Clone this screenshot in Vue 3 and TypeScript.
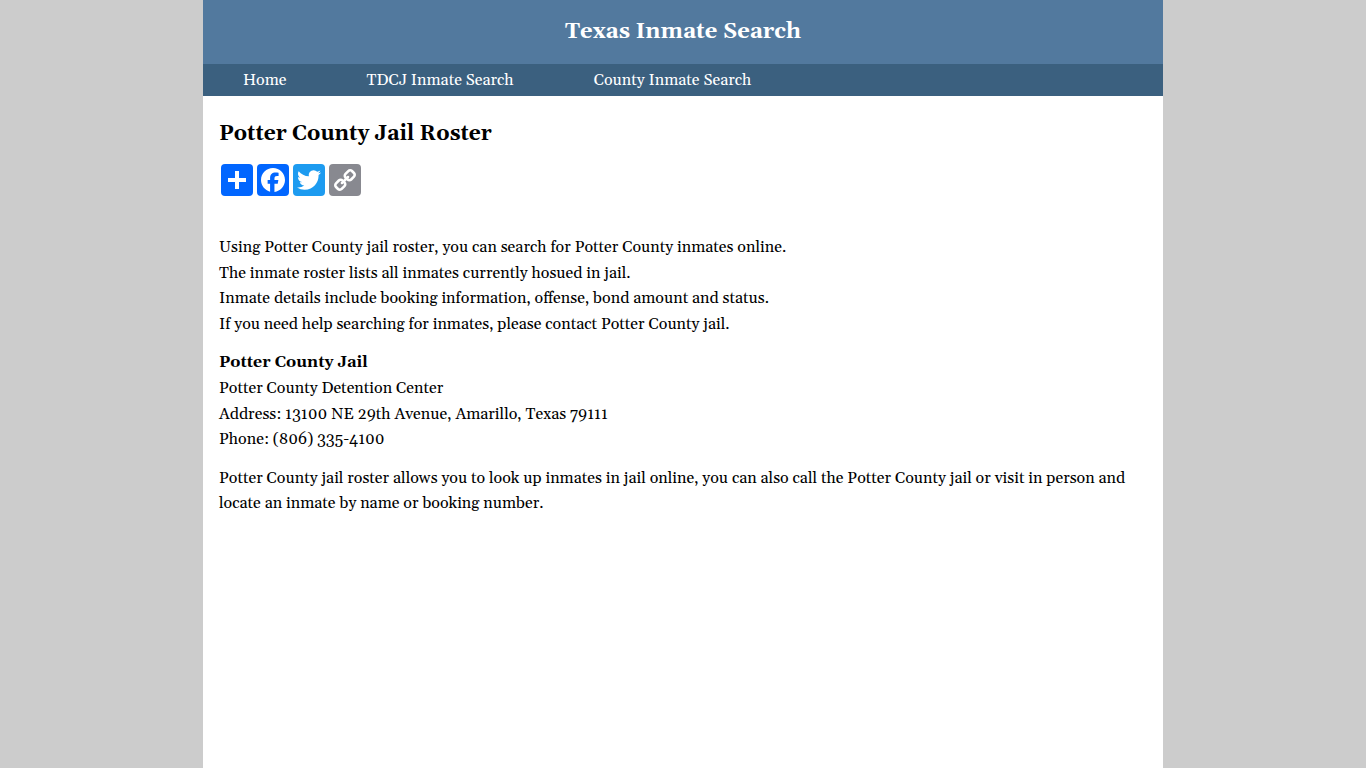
<script setup lang="ts">
interface Link { label: string; href: string }
interface Share { name: string; tone: string; path: string; turn?: string }

const links: Link[] = [
  { label: 'Home', href: '#home' },
  { label: 'TDCJ Inmate Search', href: '#tdcj' },
  { label: 'County Inmate Search', href: '#county' },
]

const shares: Share[] = [
  {
    name: 'Share',
    tone: 'blue',
    path: 'M14 7h4v18h-4z M7 14h18v4H7z',
  },
  {
    name: 'Facebook',
    tone: 'blue',
    path: 'M28 16c0-6.627-5.373-12-12-12S4 9.373 4 16c0 5.628 3.875 10.35 9.101 11.647v-7.98h-2.474V16H13.1v-1.58c0-4.085 1.849-5.978 5.859-5.978.76 0 2.072.15 2.608.298v3.325c-.283-.03-.775-.045-1.386-.045-1.967 0-2.728.745-2.728 2.683V16h3.92l-.673 3.667h-3.247v8.245C23.395 27.195 28 22.135 28 16',
  },
  {
    name: 'Twitter',
    tone: 'sky',
    path: 'M28 8.557a10 10 0 0 1-2.828.775 4.93 4.93 0 0 0 2.166-2.725 9.7 9.7 0 0 1-3.13 1.194 4.92 4.92 0 0 0-3.593-1.55 4.924 4.924 0 0 0-4.794 6.049c-4.09-.21-7.72-2.17-10.15-5.15a4.94 4.94 0 0 0-.665 2.477c0 1.71.87 3.214 2.19 4.1a5 5 0 0 1-2.23-.616v.06c0 2.39 1.7 4.38 3.952 4.83-.414.115-.85.174-1.297.174q-.476-.001-.928-.086a4.935 4.935 0 0 0 4.6 3.42 9.9 9.9 0 0 1-6.114 2.107q-.597 0-1.175-.068a13.95 13.95 0 0 0 7.55 2.213c9.056 0 14.01-7.507 14.01-14.013q0-.32-.015-.637c.96-.695 1.795-1.56 2.455-2.55z',
  },
  {
    name: 'Copy Link',
    tone: 'gray',
    turn: 'matrix(-1 0 0 1 32 0)',
    path: 'M24.412 21.177c0-.36-.126-.665-.377-.917l-2.804-2.804a1.24 1.24 0 0 0-.913-.378c-.377 0-.7.144-.97.43q.04.04.255.25c.144.14.24.236.29.29s.117.14.2.256q.13.175.177.344.048.167.048.366 0 .54-.377.918a1.25 1.25 0 0 1-.918.377 1.4 1.4 0 0 1-.366-.047 1.1 1.1 0 0 1-.345-.175l-.256-.2a4 4 0 0 1-.29-.29c-.14-.142-.223-.23-.25-.254-.297.28-.445.607-.445.984 0 .36.126.664.377.916l2.778 2.79c.243.243.548.364.917.364q.54 0 .917-.35l1.982-1.97c.252-.25.378-.55.378-.9zm-9.477-9.504c0-.36-.126-.665-.377-.917l-2.777-2.79a1.24 1.24 0 0 0-.913-.378c-.35 0-.656.12-.917.364L7.967 9.92c-.254.252-.38.553-.38.903 0 .36.126.665.38.917l2.802 2.804c.242.243.547.364.916.364.377 0 .7-.14.97-.418-.027-.027-.11-.11-.255-.25s-.24-.235-.29-.29a3 3 0 0 1-.2-.255 1.1 1.1 0 0 1-.176-.344 1.4 1.4 0 0 1-.047-.365q0-.54.377-.917a1.25 1.25 0 0 1 .917-.377q.197 0 .365.047.17.047.346.176.175.13.256.2c.05.05.15.15.29.29s.223.223.25.25q.445-.418.445-.984zM27 21.176q0 1.618-1.146 2.74l-1.983 1.968q-1.12 1.12-2.737 1.12c-1.087 0-2.004-.38-2.75-1.143l-2.777-2.79c-.75-.747-1.12-1.66-1.12-2.737q0-1.659 1.183-2.818l-1.186-1.185q-1.16 1.186-2.805 1.186c-1.078 0-1.995-.376-2.75-1.13l-2.803-2.81C5.377 12.82 5 11.903 5 10.826q0-1.62 1.146-2.742L8.13 6.12q1.12-1.12 2.737-1.12c1.087 0 2.004.382 2.75 1.145l2.777 2.79c.747.747 1.12 1.66 1.12 2.737q0 1.658-1.184 2.817l1.186 1.186q1.16-1.185 2.804-1.185 1.617 0 2.75 1.132l2.804 2.804C26.624 19.18 27 20.097 27 21.175z',
  },
]
</script>

<template>
  <div class="page">
    <header class="banner">Texas Inmate Search</header>
    <nav class="menu">
      <a v-for="link in links" :key="link.label" :href="link.href">{{ link.label }}</a>
    </nav>
    <main class="content">
      <h1>Potter County Jail Roster</h1>
      <div class="shares">
        <a v-for="s in shares" :key="s.name" href="#share" :class="s.tone" :aria-label="s.name">
          <svg viewBox="0 0 32 32" aria-hidden="true"><path fill="#fff" :d="s.path" :transform="s.turn" /></svg>
        </a>
      </div>
      <p>
        Using Potter County jail roster, you can search for Potter County inmates online.<br />
        The inmate roster lists all inmates currently hosued in jail.<br />
        Inmate details include booking information, offense, bond amount and status.<br />
        If you need help searching for inmates, please contact Potter County jail.
      </p>
      <p>
        <strong>Potter County Jail</strong><br />
        Potter County Detention Center<br />
        Address: 13100 NE 29th Avenue, Amarillo, Texas 79111<br />
        Phone: (806) 335-4100
      </p>
      <p>
        Potter County jail roster allows you to look up inmates in jail online, you can also call the Potter County jail or visit in person and locate an inmate by name or booking number.
      </p>
    </main>
  </div>
</template>

<style>
body {
  margin: 0;
  background: #ccc;
}
</style>

<style scoped>
.page {
  box-sizing: border-box;
  max-width: 960px;
  min-height: 100vh;
  margin: 0 auto;
  background: #fff;
  color: #000;
  font-family: Georgia, Gelasio, "Liberation Serif", serif;
  font-size: 16px;
  line-height: 1.6;
}
.banner {
  background: #52799e;
  color: #fff;
  font-size: 22px;
  font-weight: bold;
  line-height: 64px;
  text-align: center;
}
.menu {
  display: flex;
  flex-wrap: wrap;
  background: #3b607f;
}
.menu a {
  padding: 0 40px;
  color: #fff;
  line-height: 32px;
  text-decoration: none;
}
.content {
  padding: 20px 16px;
}
h1 {
  margin: 0 0 12px;
  font-size: 21px;
  line-height: 36px;
}
.shares {
  display: flex;
  gap: 4px;
  margin-bottom: 39px;
  padding-left: 2px;
}
.shares a {
  width: 32px;
  height: 32px;
  border-radius: 4px;
}
.shares svg {
  display: block;
}
.blue { background: #0166ff; }
.sky { background: #1d9bf0; }
.gray { background: #888990; }
p {
  margin: 0 0 13px;
}
</style>
